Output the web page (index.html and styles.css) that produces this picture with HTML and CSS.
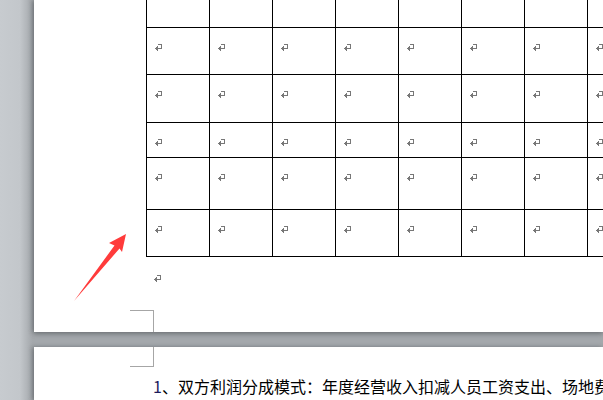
FILE: index.html
```html
<!DOCTYPE html>
<html>
<head>
<meta charset="utf-8">
<link rel="stylesheet" href="styles.css">
</head>
<body>
<div class="doc">
  <div class="page page1">
    <div class="grid">
      <div class="row r0"><div class="c"></div><div class="c"></div><div class="c"></div><div class="c"></div><div class="c"></div><div class="c"></div><div class="c"></div><div class="c"></div></div>
      <div class="row r1"><div class="c"><span class="pm"></span></div><div class="c"><span class="pm"></span></div><div class="c"><span class="pm"></span></div><div class="c"><span class="pm"></span></div><div class="c"><span class="pm"></span></div><div class="c"><span class="pm"></span></div><div class="c"><span class="pm"></span></div><div class="c"><span class="pm"></span></div></div>
      <div class="row r2"><div class="c"><span class="pm"></span></div><div class="c"><span class="pm"></span></div><div class="c"><span class="pm"></span></div><div class="c"><span class="pm"></span></div><div class="c"><span class="pm"></span></div><div class="c"><span class="pm"></span></div><div class="c"><span class="pm"></span></div><div class="c"><span class="pm"></span></div></div>
      <div class="row r3"><div class="c"><span class="pm"></span></div><div class="c"><span class="pm"></span></div><div class="c"><span class="pm"></span></div><div class="c"><span class="pm"></span></div><div class="c"><span class="pm"></span></div><div class="c"><span class="pm"></span></div><div class="c"><span class="pm"></span></div><div class="c"><span class="pm"></span></div></div>
      <div class="row r4"><div class="c"><span class="pm"></span></div><div class="c"><span class="pm"></span></div><div class="c"><span class="pm"></span></div><div class="c"><span class="pm"></span></div><div class="c"><span class="pm"></span></div><div class="c"><span class="pm"></span></div><div class="c"><span class="pm"></span></div><div class="c"><span class="pm"></span></div></div>
      <div class="row r5"><div class="c"><span class="pm"></span></div><div class="c"><span class="pm"></span></div><div class="c"><span class="pm"></span></div><div class="c"><span class="pm"></span></div><div class="c"><span class="pm"></span></div><div class="c"><span class="pm"></span></div><div class="c"><span class="pm"></span></div><div class="c"><span class="pm"></span></div></div>
    </div>
    <div class="after"><span class="pm"></span></div>
    <div class="crop crop-top"></div>
  </div>
  <div class="page page2">
    <div class="crop crop-bottom"></div>
    <p class="para"><span class="num">1</span>、双方利润分成模式：年度经营收入扣减人员工资支出、场地费</p>
  </div>
  <svg class="arrow" width="603" height="400" viewBox="0 0 603 400">
    <polygon points="126,234 109,243 114.5,245.5 74,301 119.5,248.5 122,252" fill="#ff3b3b"/>
  </svg>
</div>
</body>
</html>
```
FILE: styles.css
```css
html, body {
  margin: 0;
  padding: 0;
}
body {
  width: 603px;
  height: 400px;
  overflow: hidden;
  background: #c5c9cd;
  font-family: "Noto Sans CJK SC", "Noto Sans", sans-serif;
}
.doc {
  position: relative;
  display: flex;
  flex-direction: column;
  width: 603px;
  height: 400px;
  background: linear-gradient(to right, #c7cbcf 0, #c3c7cb 20px, #a9adb1 30px, #a4a8ac 33px);
}
.page {
  position: relative;
  margin-left: 34px;
  background: #fff;
  overflow: hidden;
  box-shadow: -2px 0 4px rgba(70, 74, 78, 0.35), 0 2px 5px rgba(70, 74, 78, 0.45);
}
.page1 {
  height: 332px;
  flex: none;
}
.page2 {
  margin-top: 15px;
  flex: 1;
}
.grid {
  margin-left: 112px;
  display: flex;
  flex-direction: column;
  width: 600px;
  border-left: 1px solid #000;
}
.row {
  display: flex;
  border-bottom: 1px solid #000;
}
.r0 { height: 27px; }
.r1 { height: 46px; }
.r2 { height: 47px; }
.r3 { height: 34px; }
.r4 { height: 51px; }
.r5 { height: 46px; }
.c {
  flex: none;
  width: 63px;
  border-right: 1px solid #000;
  padding: 16px 0 0 8px;
  box-sizing: border-box;
}
.r0 .c { padding: 0; }
.pm {
  display: block;
  width: 7px;
  height: 7px;
  background:
    linear-gradient(#777, #777) 3px 0 / 4px 1px no-repeat,
    linear-gradient(#777, #777) 6px 0 / 1px 5px no-repeat,
    linear-gradient(#777, #777) 1px 4px / 6px 1px no-repeat,
    linear-gradient(#777, #777) 0 4px / 1px 1px no-repeat,
    linear-gradient(#777, #777) 1px 3px / 1px 3px no-repeat,
    linear-gradient(#777, #777) 2px 2px / 1px 5px no-repeat;
}
.after {
  margin: 18px 0 0 120px;
}
.crop {
  position: absolute;
  left: 96px;
  width: 23px;
  border-color: #a6a6a6;
  border-style: solid;
  border-width: 0;
}
.crop-top {
  bottom: 0;
  height: 21px;
  border-top-width: 1px;
  border-right-width: 1px;
}
.crop-bottom {
  top: 0;
  height: 19px;
  border-bottom-width: 1px;
  border-right-width: 1px;
}
.para {
  margin: 29px 0 0 119px;
  font-size: 16px;
  line-height: 20px;
  letter-spacing: 0;
  white-space: nowrap;
  color: #000;
}
.num {
  color: #1c1c5c;
}
.arrow {
  position: absolute;
  left: 0;
  top: 0;
  pointer-events: none;
}
```
